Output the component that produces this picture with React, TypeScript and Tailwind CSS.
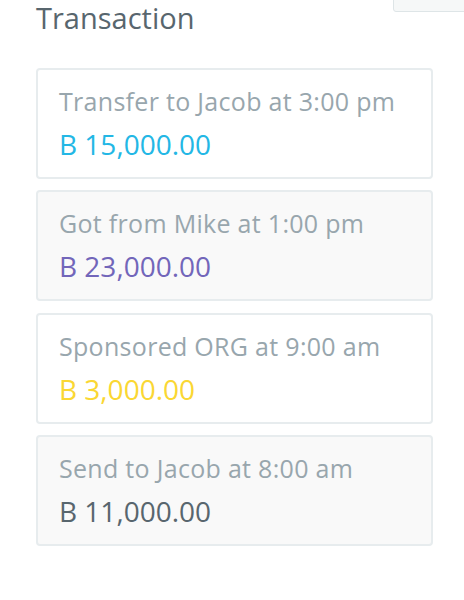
const items = [
  { label: "Transfer to Jacob at 3:00 pm", amount: "B 15,000.00", color: "text-[#23b7e5]", bg: "bg-white" },
  { label: "Got from Mike at 1:00 pm", amount: "B 23,000.00", color: "text-[#7266ba]", bg: "bg-[#f9f9f9]" },
  { label: "Sponsored ORG at 9:00 am", amount: "B 3,000.00", color: "text-[#fad733]", bg: "bg-white" },
  { label: "Send to Jacob at 8:00 am", amount: "B 11,000.00", color: "text-[#58666e]", bg: "bg-[#f9f9f9]" },
];

export default function App() {
  return (
    <div className="relative min-h-[600px] w-[464px] overflow-hidden bg-white font-['Open_Sans',sans-serif]">
      {/* partially visible button at top right */}
      <div className="absolute left-[393px] top-[-10px] h-[22px] w-[100px] rounded-[3px] border border-[#dee5e7] bg-[#f6f8f8]" />

      <div className="pl-[36px] pr-[31px]">
        <h3 className="text-[29px] leading-[36px] text-[#58666e] font-normal">Transaction</h3>

        <div className="mt-[32px] flex flex-col gap-[11.33px]">
          {items.map((it) => (
            <div
              key={it.label}
              className={`h-[111px] rounded-[4px] border-2 border-[#e7ecee] ${it.bg} px-[21px] pt-[15px]`}
            >
              <div className="text-[25px] leading-[32px] text-[#98a6ad] tracking-[0.3px]">{it.label}</div>
              <div className={`mt-[9px] text-[28px] leading-[36px] ${it.color}`}>{it.amount}</div>
            </div>
          ))}
        </div>
      </div>
    </div>
  );
}
